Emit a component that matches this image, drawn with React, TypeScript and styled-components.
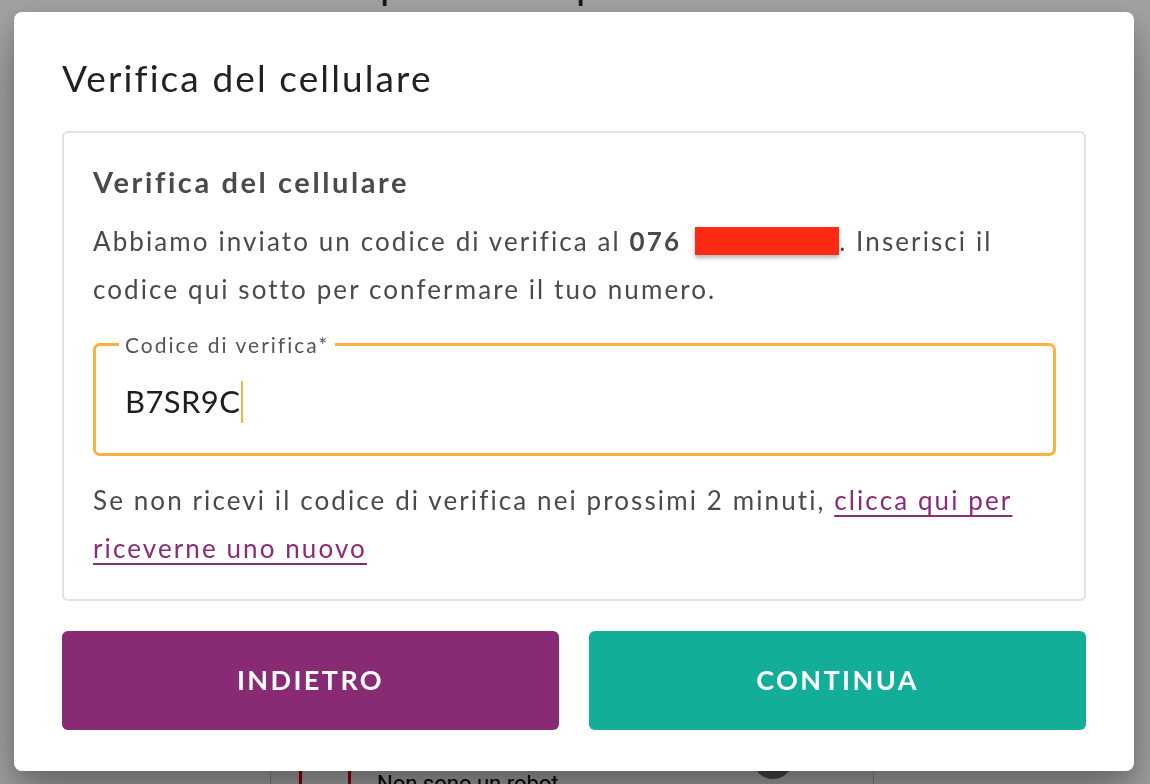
import React from 'react'
import styled, { createGlobalStyle } from 'styled-components'

// G L O B A L
const GlobalStyle = createGlobalStyle`
  html, body {
    margin: 0;
    padding: 0;
    height: 100%;
    overflow: hidden;
  }

  body {
    background: #ffffff;
    font-family: Lato, "Noto Sans", "Liberation Sans", sans-serif;
  }
`

// P A G E   B E H I N D
const Page = styled.main`
  box-sizing: border-box;
  display: flex;
  flex-direction: column;
  width: 604px;
  height: 784px;
  overflow: hidden;
  margin: 0 auto 0 270px;
`

const PageTitle = styled.h1`
  margin: -40px 0 0 0;
  padding-left: 28px;
  font-size: 40px;
  font-weight: 400;
  color: #222;
`

const Spacer = styled.div`
  flex: 1;
`

const CaptchaCard = styled.div`
  box-sizing: border-box;
  flex: none;
  display: flex;
  align-items: flex-start;
  gap: 26px;
  height: 80px;
  margin-bottom: -66px;
  padding: 2px 30px 0 28px;
  border: 1px solid #c8c8c8;
  background: #f9f9f9;
  border-radius: 3px;
`

const CaptchaBox = styled.span`
  box-sizing: border-box;
  width: 52px;
  height: 52px;
  margin-top: -8px;
  border: 3px solid #e00000;
  border-radius: 2px;
  background: #fff;
`

const CaptchaLabel = styled.span`
  flex: 1;
  font-family: Roboto, "Liberation Sans", sans-serif;
  font-size: 22px;
  line-height: 22px;
  color: #000;
`

const CaptchaLogo = styled.span`
  width: 40px;
  height: 40px;
  margin: -34px 50px 0 0;
  border-radius: 50%;
  background: #6d6d6d;
`

// O V E R L A Y
const Backdrop = styled.div`
  position: fixed;
  inset: 0;
  display: flex;
  align-items: flex-start;
  padding: 12px 16px 0 14px;
  background: rgba(0, 0, 0, 0.37);
`

const Dialog = styled.section`
  box-sizing: border-box;
  display: flex;
  flex-direction: column;
  width: 1120px;
  height: 759px;
  padding: 43px 48px 0 48px;
  background: #fff;
  border-radius: 8px;
  box-shadow: 0 26px 50px rgba(0, 0, 0, 0.32), 0 8px 18px rgba(0, 0, 0, 0.12);
`

const DialogTitle = styled.h2`
  margin: 0 0 30px 0;
  font-size: 37px;
  line-height: 46px;
  font-weight: 400;
  color: #222;
  letter-spacing: 2.1px;
`

const Card = styled.div`
  box-sizing: border-box;
  flex: none;
  height: 470px;
  padding: 29px 28px 0 29px;
  border: 2px solid #e2e2e2;
  border-radius: 6px;
`

const CardTitle = styled.h3`
  margin: 0 0 15px 0;
  font-size: 29px;
  line-height: 40px;
  font-weight: 700;
  color: #4a4a4a;
  letter-spacing: 2.6px;
`

const Paragraph = styled.p`
  margin: 0;
  font-size: 26px;
  line-height: 48px;
  color: #4a4a4a;
  letter-spacing: 2.1px;

  strong {
    font-weight: 700;
  }
`

const Redacted = styled.span`
  display: inline-block;
  width: 144px;
  height: 28px;
  margin-left: 14px;
  vertical-align: -4px;
  background: #ff2a14;
  box-shadow: 0 3px 4px rgba(0, 0, 0, 0.28);
`

const Field = styled.fieldset`
  box-sizing: border-box;
  height: 124px;
  margin: 19px 0 20px 0;
  padding: 0 0 6px 29px;
  border: 3px solid #fbb040;
  border-radius: 7px;
  display: flex;
  align-items: center;
`

const Legend = styled.legend`
  padding: 0 6px;
  margin-left: -6px;
  font-size: 21px;
  color: #555;
  letter-spacing: 2px;
`

const Value = styled.span`
  font-size: 31px;
  color: #1e1e1e;
  letter-spacing: 0.4px;
`

const Caret = styled.span`
  display: inline-block;
  width: 2px;
  height: 42px;
  margin-left: 1px;
  vertical-align: -10px;
  background: #fbb040;
`

const Link = styled.a`
  color: #8b2a78;
  text-decoration: underline;
  text-underline-offset: 5px;
  text-decoration-thickness: 2px;
`

const Actions = styled.div`
  display: grid;
  grid-template-columns: 1fr 1fr;
  gap: 30px;
  margin-top: 30px;
`

const Button = styled.button<{ tone: 'back' | 'next' }>`
  height: 99px;
  padding: 0 0 3px 0;
  border: none;
  border-radius: 6px;
  background: ${(props): string => (props.tone === 'back' ? '#882a74' : '#12ae98')};
  color: #fff;
  font-family: Lato, "Noto Sans", "Liberation Sans", sans-serif;
  font-size: 27px;
  font-weight: 700;
  letter-spacing: 2.4px;
  cursor: pointer;
`

// C O M P O N E N T
export default function App (): JSX.Element {
  return (
    <>
      <GlobalStyle />
      <Page>
        <PageTitle>Completa il tuo profilo</PageTitle>
        <Spacer />
        <CaptchaCard>
          <CaptchaBox />
          <CaptchaLabel>Non sono un robot</CaptchaLabel>
          <CaptchaLogo />
        </CaptchaCard>
      </Page>
      <Backdrop>
        <Dialog>
          <DialogTitle>Verifica del cellulare</DialogTitle>
          <Card>
            <CardTitle>Verifica del cellulare</CardTitle>
            <Paragraph>
              Abbiamo inviato un codice di verifica al <strong>076</strong>
              <Redacted />. Inserisci il codice qui sotto per confermare il tuo numero.
            </Paragraph>
            <Field>
              <Legend>Codice di verifica*</Legend>
              <Value>B7SR9C<Caret /></Value>
            </Field>
            <Paragraph>
              Se non ricevi il codice di verifica nei prossimi 2 minuti,{' '}
              <Link href='#'>clicca qui per riceverne uno nuovo</Link>
            </Paragraph>
          </Card>
          <Actions>
            <Button tone='back'>INDIETRO</Button>
            <Button tone='next'>CONTINUA</Button>
          </Actions>
        </Dialog>
      </Backdrop>
    </>
  )
}
